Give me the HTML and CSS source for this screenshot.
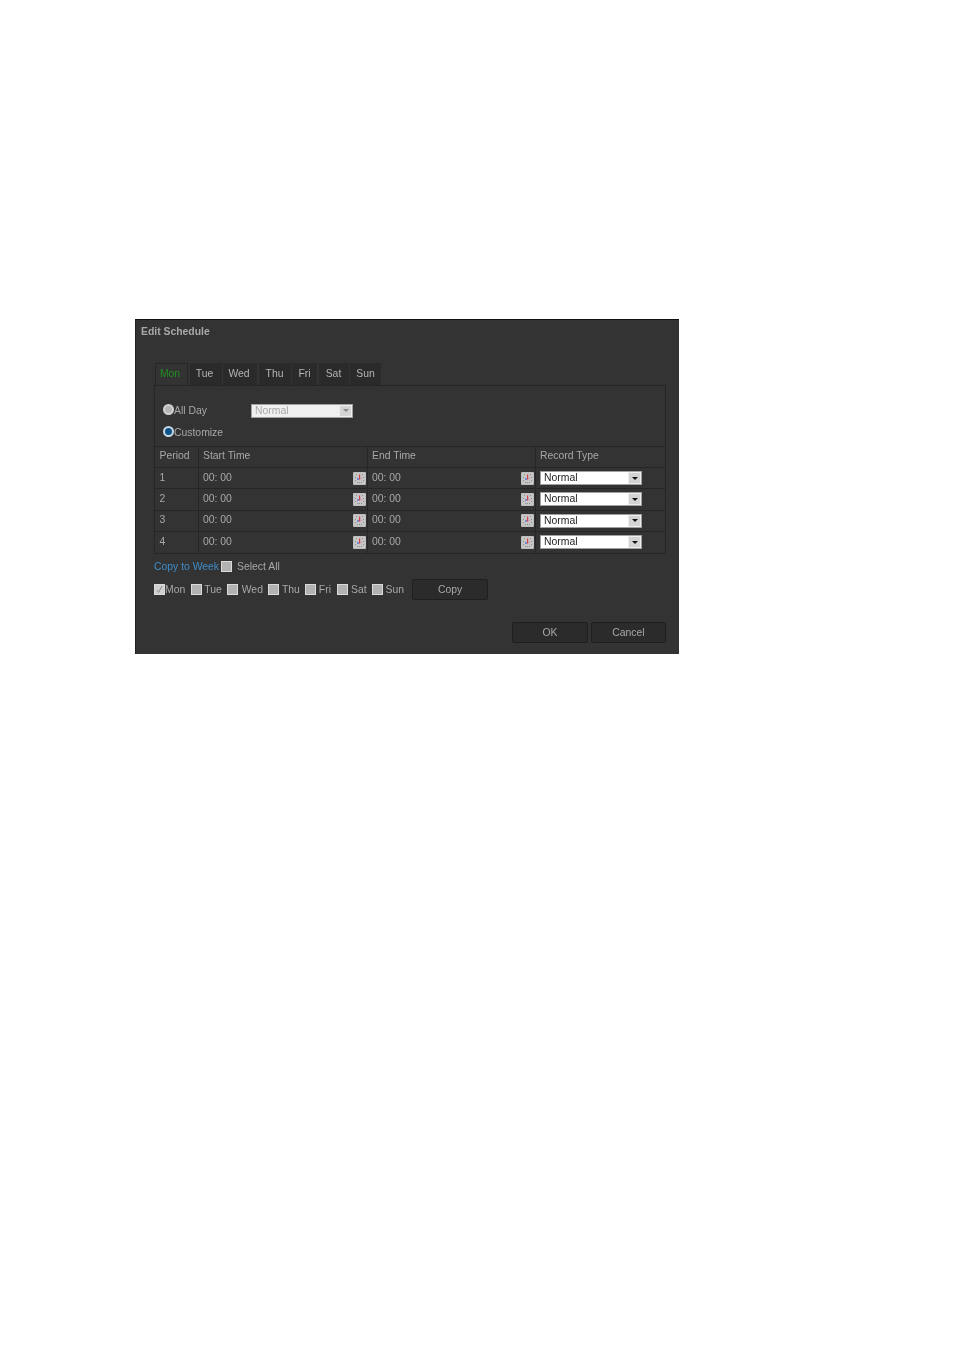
FILE: index.html
```html
<!DOCTYPE html>
<html lang="en">
<head>
  <meta charset="UTF-8">
  <meta name="viewport" content="width=device-width, initial-scale=1.0">
  <title>Edit Schedule</title>
  <link rel="stylesheet" href="styles.css">
</head>
<body>
  <svg width="0" height="0" class="defs">
    <symbol id="clock" viewBox="0 0 13 13">
      <rect width="13" height="13" rx="1" fill="#bdbdbd"/>
      <rect x="1" y="1" width="11" height="11" fill="#c6c6c6"/>
      <g fill="#8c8c8c">
        <rect x="3" y="2" width="1" height="1"/><rect x="9" y="2" width="1" height="1"/>
        <rect x="2" y="5" width="1" height="1"/><rect x="10" y="5" width="1" height="1"/>
        <rect x="2" y="8" width="1" height="1"/><rect x="10" y="8" width="1" height="1"/>
        <rect x="4" y="10" width="1" height="1"/><rect x="8" y="10" width="1" height="1"/>
        <rect x="6" y="10" width="1" height="1"/>
      </g>
      <rect x="6" y="2.5" width="1.2" height="5" fill="#d8404a"/>
      <rect x="4" y="6" width="2" height="2" fill="#7a8cc8"/>
      <rect x="7.2" y="6" width="1.8" height="1" fill="#dc9aa0"/>
    </symbol>
  </svg>

  <div class="dialog">
    <div class="title">Edit Schedule</div>

    <div class="tabs">
      <div class="tab active day-mon">Mon</div>
      <div class="tab day-tue">Tue</div>
      <div class="tab day-wed">Wed</div>
      <div class="tab day-thu">Thu</div>
      <div class="tab day-fri">Fri</div>
      <div class="tab day-sat">Sat</div>
      <div class="tab day-sun">Sun</div>
    </div>

    <div class="panel">
      <div class="mode-row">
        <span class="radio"></span><span class="mode-label">All Day</span>
        <div class="select disabled"><span>Normal</span><i class="arrow"></i></div>
      </div>
      <div class="mode-row">
        <span class="radio on"></span><span>Customize</span>
      </div>

      <table class="periods">
        <colgroup>
          <col class="c-period"><col class="c-start"><col class="c-end"><col class="c-type">
        </colgroup>
        <tr class="head"><th>Period</th><th>Start Time</th><th>End Time</th><th>Record Type</th></tr>
        <tr>
          <td>1</td>
          <td><div class="time"><span>00: 00</span><svg class="clock"><use href="#clock"/></svg></div></td>
          <td><div class="time"><span>00: 00</span><svg class="clock"><use href="#clock"/></svg></div></td>
          <td><div class="select"><span>Normal</span><i class="arrow"></i></div></td>
        </tr>
        <tr>
          <td>2</td>
          <td><div class="time"><span>00: 00</span><svg class="clock"><use href="#clock"/></svg></div></td>
          <td><div class="time"><span>00: 00</span><svg class="clock"><use href="#clock"/></svg></div></td>
          <td><div class="select"><span>Normal</span><i class="arrow"></i></div></td>
        </tr>
        <tr>
          <td>3</td>
          <td><div class="time"><span>00: 00</span><svg class="clock"><use href="#clock"/></svg></div></td>
          <td><div class="time"><span>00: 00</span><svg class="clock"><use href="#clock"/></svg></div></td>
          <td><div class="select"><span>Normal</span><i class="arrow"></i></div></td>
        </tr>
        <tr>
          <td>4</td>
          <td><div class="time"><span>00: 00</span><svg class="clock"><use href="#clock"/></svg></div></td>
          <td><div class="time"><span>00: 00</span><svg class="clock"><use href="#clock"/></svg></div></td>
          <td><div class="select"><span>Normal</span><i class="arrow"></i></div></td>
        </tr>
      </table>
    </div>

    <div class="copy-head">
      <span class="link">Copy to Week</span>
      <span class="check"></span>
      <span class="select-all">Select All</span>
    </div>

    <div class="copy-days">
      <span class="check checked">
        <svg viewBox="0 0 9 9"><path d="M2 5l1.5 2.5L7 1" fill="none" stroke="#8f8f8f" stroke-width="1"/></svg>
      </span><span class="d-mon">Mon</span>
      <span class="check"></span><span class="d-tue">Tue</span>
      <span class="check"></span><span class="d-wed">Wed</span>
      <span class="check"></span><span class="d-thu">Thu</span>
      <span class="check"></span><span class="d-fri">Fri</span>
      <span class="check"></span><span class="d-sat">Sat</span>
      <span class="check"></span><span class="d-sun">Sun</span>
      <button class="btn btn-copy">Copy</button>
    </div>

    <div class="actions">
      <button class="btn">OK</button>
      <button class="btn btn-cancel">Cancel</button>
    </div>
  </div>
</body>
</html>
```

FILE: styles.css
```css
:root {
  --bg: #333333;
  --line: #262626;
  --text: #a8a8a8;
}

body {
  margin: 0;
  padding: 319px 0 0 135px;
  background: #fff;
  font-family: "Liberation Sans", Arial, sans-serif;
  font-size: 10.4px;
  color: var(--text);
}
.defs {
  position: absolute;
}
.dialog {
  width: 544px;
  height: 335px;
  box-sizing: border-box;
  background: var(--bg);
  border-top: 1px solid #111;
  border-left: 1px solid #222;
  padding: 5px 13px 0 18px;
  filter: blur(0.4px);
}
.title {
  margin-left: -13px;
  height: 13px;
  line-height: 13px;
  font-weight: bold;
}

/* day tabs */
.tabs {
  display: flex;
  margin: 25px 0 0 1px;
  height: 22px;
}
.tab {
  background: #2a2a2a;
  line-height: 21px;
  text-align: center;
  color: #b4b4b4;
}
.tab.active {
  background: #333;
  color: #1f8f1f;
  border: 1px solid var(--line);
  border-bottom: none;
  box-sizing: border-box;
  line-height: 20px;
  padding-right: 3px;
}
.day-mon { width: 33px; }
.day-tue { width: 32px; margin-left: 1.5px; text-indent: -2px; }
.day-wed { width: 34px; margin-left: 1.5px; text-indent: -2px; }
.day-thu { width: 32px; margin-left: 1.5px; }
.day-fri { width: 25px; margin-left: 1.5px; }
.day-sat { width: 30px; margin-left: 1.5px; }
.day-sun { width: 31px; margin-left: 1.5px; }

.panel {
  width: 512px;
  height: 169px;
  box-sizing: border-box;
  border: 1px solid var(--line);
  padding-top: 14px;
}

/* all day / customize */
.mode-row {
  display: flex;
  align-items: center;
  height: 21.5px;
  padding-left: 8px;
}
.mode-label {
  width: 77px;
}
.radio {
  width: 11px;
  height: 11px;
  box-sizing: border-box;
  border-radius: 50%;
  background: #b5b5b5;
  border: 2px solid #d2d2d2;
  flex: none;
  margin-top: -2px;
}
.radio.on {
  background: #0c5388;
  border: 2px solid #c8d8e2;
}

/* selects */
.select {
  display: flex;
  align-items: center;
  justify-content: space-between;
  width: 102px;
  height: 14px;
  box-sizing: border-box;
  background: #fff;
  border: 1px solid #a0a0a0;
  padding-left: 3px;
  color: #222;
}
.select > span {
  margin-bottom: 1px;
}
.select .arrow {
  width: 13px;
  height: 12px;
  box-sizing: border-box;
  background: #d4d4d4;
  border: 1px solid #eee;
  position: relative;
}
.select .arrow::after {
  content: "";
  position: absolute;
  left: 2.5px;
  top: 3.5px;
  border: 3px solid transparent;
  border-top: 3.5px solid #111;
  border-bottom: none;
}
.select.disabled {
  background: #f0f0f0;
  color: #a8a8a8;
}
.select.disabled .arrow::after {
  border-top-color: #888;
}

/* period table */
.periods {
  width: 510px;
  table-layout: fixed;
  border-collapse: collapse;
  margin-top: 3px;
}
.c-period { width: 43px; }
.c-start { width: 169px; }
.c-end { width: 168px; }
.periods tr {
  height: 21.3px;
}
.periods tr.head {
  height: 21px;
}
.periods th, .periods td {
  border: 1px solid var(--line);
  padding: 0 0 0 4.5px;
  font-weight: normal;
  text-align: left;
}
.periods tr.head th {
  padding-bottom: 3px;
}
.periods tr td:first-child {
  padding-bottom: 2px;
}
.periods tr > :first-child {
  border-left: none;
}
.periods tr > :last-child {
  border-right: none;
}
.periods tr:last-child td {
  border-bottom: none;
}
.time {
  display: flex;
  align-items: center;
  justify-content: space-between;
  padding-right: 1px;
}
.time > span {
  margin-bottom: 2px;
}
.clock {
  width: 13px;
  height: 13px;
}

/* copy to week */
.copy-head {
  display: flex;
  align-items: center;
  height: 13px;
  margin-top: 6px;
}
.link {
  color: #3f8cc9;
}
.check {
  width: 11px;
  height: 11px;
  box-sizing: border-box;
  background: #b2b2b2;
  border: 1px solid #dadada;
  flex: none;
  display: block;
  margin-left: 2px;
}
.check.checked {
  background: #d0d0d0;
}
.check svg {
  display: block;
  width: 9px;
  height: 9px;
}
.select-all {
  margin-left: 5px;
}
.copy-days {
  display: flex;
  align-items: center;
  height: 21px;
  margin-top: 6px;
}
.copy-days .check {
  margin-left: 0;
}
.d-mon { margin: 0 6px 0 0; }
.d-tue { margin: 0 5px 0 2px; }
.d-wed { margin: 0 5px 0 4px; }
.d-thu { margin: 0 5px 0 3px; }
.d-fri { margin: 0 6px 0 3px; }
.d-sat { margin: 0 5px 0 3px; }
.d-sun { margin: 0 0 0 3px; }

/* buttons */
.btn {
  width: 76px;
  height: 21px;
  background: #2b2b2b;
  border: 1px solid #1f1f1f;
  border-radius: 2px;
  color: var(--text);
  font: inherit;
  padding: 0;
}
.btn-copy {
  margin-left: 8px;
}
.btn-cancel {
  width: 75px;
}
.actions {
  display: flex;
  justify-content: flex-end;
  gap: 3px;
  margin-top: 22px;
}
```
